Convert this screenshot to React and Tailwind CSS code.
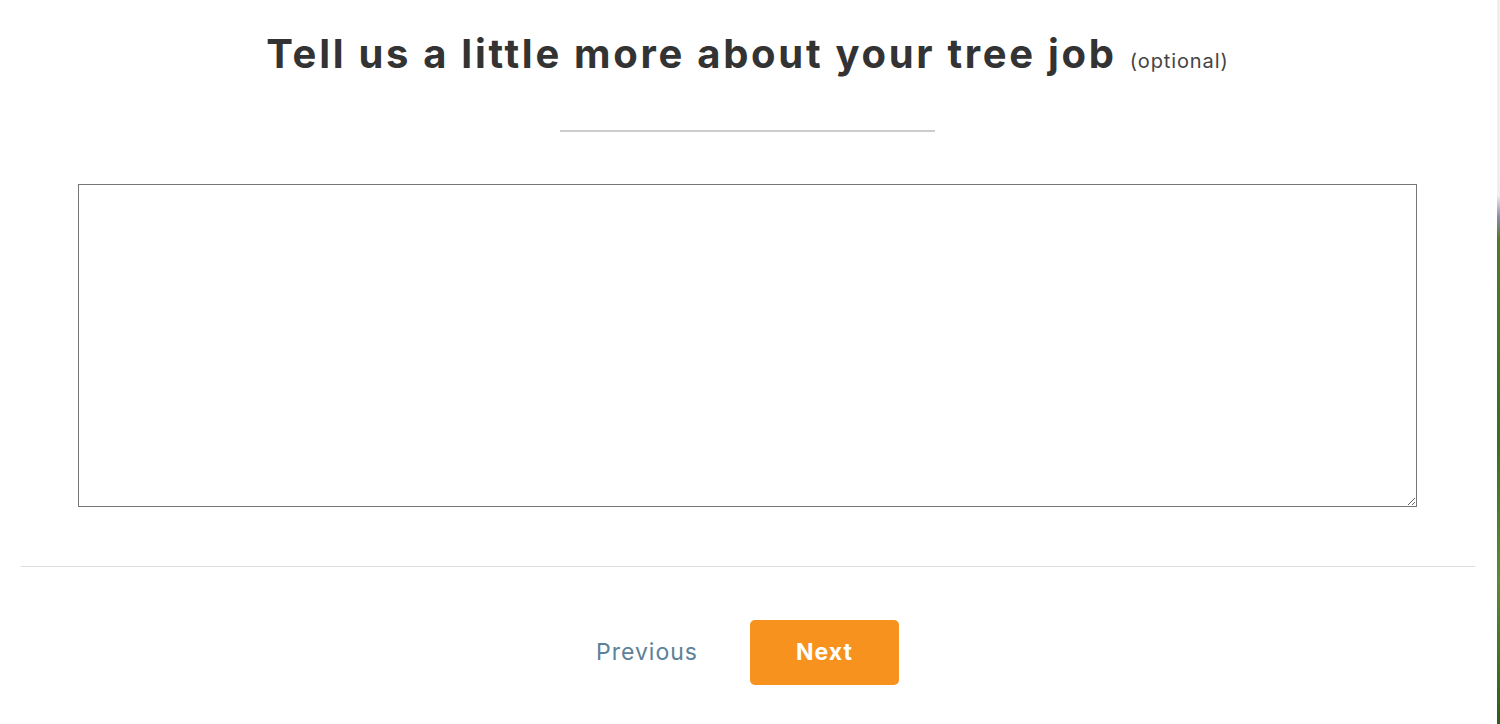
export default function App() {
  return (
    <div className="flex h-[724px] w-[1500px] overflow-hidden bg-white font-['Inter',sans-serif]">
      <div className="flex w-[1497px] flex-col items-center bg-white pr-[2px]">
        <div className="mt-[28px] flex items-baseline gap-[13px]">
          <h1 className="text-[40px] font-bold leading-[52px] tracking-[2.7px] text-[#333333]">
            Tell us a little more about your tree job
          </h1>
          <span className="text-[20px] tracking-[0.9px] text-[#444444]">(optional)</span>
        </div>
        <div className="mt-[50px] h-[2px] w-[375px] bg-[#cccccc]" />
        <div className="mt-[52px] w-[1339px]">
          <textarea className="block h-[323px] w-full resize-y border border-[#767676] bg-white p-2 outline-none" />
        </div>
        <div className="mt-[59px] h-px w-[1454px] bg-[#dcdcdc]" />
        <div className="mt-[53px] flex items-center gap-[52px]">
          <button className="text-[23px] tracking-[1px] text-[#5b8299]">Previous</button>
          <button className="h-[65px] w-[149px] rounded-[5px] bg-[#f7921e] text-[23px] font-bold tracking-[1px] text-white">
            Next
          </button>
        </div>
      </div>
      <div className="h-full w-[3px] bg-[linear-gradient(to_bottom,#f3eeee_0%,#eeeef2_27%,#8a8aa8_30%,#4f7a2c_33%,#3c6b22_60%,#5c8a2e_80%,#2f5a1c_100%)]" />
    </div>
  )
}
